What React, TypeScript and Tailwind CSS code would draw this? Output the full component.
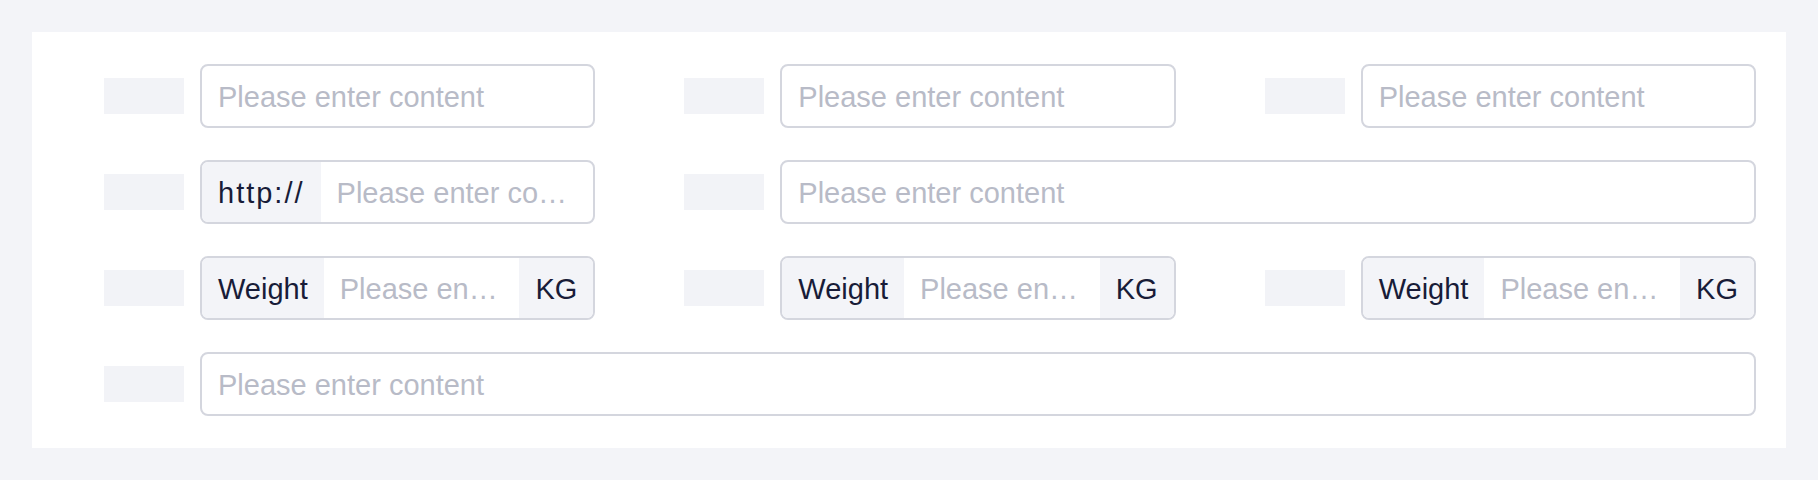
import React from 'react'

const font = { fontFamily: '"Liberation Sans", Arial, sans-serif' }

function Label() {
  return <div className="w-20 h-9 shrink-0 bg-[#f2f3f7]" />
}

function Addon({ text }: { text: string }) {
  // the url prefix is set a touch wider in the design
  const wide = text === 'http://'
  return (
    <span
      className={`shrink-0 flex items-center px-4 pt-[3px] bg-[#f3f4f8] text-[#181c38] ${wide ? 'tracking-[2px]' : ''}`}
    >
      {text}
    </span>
  )
}

function Field({ prefix, suffix }: { prefix?: string; suffix?: string }) {
  return (
    <div className="flex-1 min-w-0 h-16 flex items-stretch border-2 border-[#d4d6de] rounded-lg overflow-hidden bg-white">
      {prefix && <Addon text={prefix} />}
      <input
        className="flex-1 min-w-0 px-4 pt-[3px] bg-transparent outline-none text-ellipsis text-[#181c38] placeholder:text-[#b8bbc7]"
        placeholder="Please enter content"
      />
      {suffix && <Addon text={suffix} />}
    </div>
  )
}

function Item({ span, prefix, suffix }: { span?: 'two' | 'three'; prefix?: string; suffix?: string }) {
  const spanClass = span === 'three' ? 'col-span-3' : span === 'two' ? 'col-span-2' : ''
  return (
    <div className={`flex items-center gap-4 ${spanClass}`}>
      <Label />
      <Field prefix={prefix} suffix={suffix} />
    </div>
  )
}

export default function App() {
  return (
    <div className="min-h-screen bg-[#f3f4f8] p-8 text-[29px]" style={font}>
      <div className="bg-white py-8 pl-[72px] pr-[30px]">
        <div className="grid grid-cols-3 gap-x-[89px] gap-y-8">
          <Item />
          <Item />
          <Item />

          <Item prefix="http://" />
          <Item span="two" />

          <Item prefix="Weight" suffix="KG" />
          <Item prefix="Weight" suffix="KG" />
          <Item prefix="Weight" suffix="KG" />

          <Item span="three" />
        </div>
      </div>
    </div>
  )
}
